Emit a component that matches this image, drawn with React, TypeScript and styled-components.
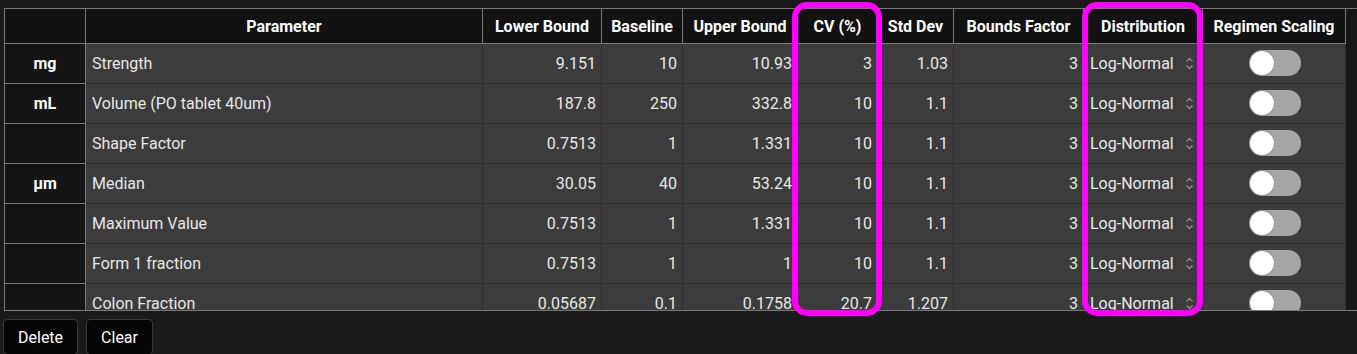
import styled, { createGlobalStyle } from "styled-components";

const GlobalStyle = createGlobalStyle`
  html, body {
    margin: 0;
    padding: 0;
    background: #1a1a1a;
    font-family: Roboto, "Liberation Sans", Arial, sans-serif;
  }
`;

const columns = "81px 397px 119px 81px 115px 80px 76px 130px 119px 143px";

const Page = styled.div`
  position: relative;
  width: 1357px;
  height: 354px;
  padding: 8px 0 0 4px;
  box-sizing: border-box;
  background: #1a1a1a;
`;

const Frame = styled.div`
  display: flex;
  width: 1353px;
  height: 301px;
  border-top: 1px solid #7a7a7a;
  border-left: 1px solid #7a7a7a;
  border-bottom: 1px solid #7a7a7a;
  overflow: hidden;
`;

const Grid = styled.div`
  width: 1341px;
  flex: 0 0 1341px;
  overflow: hidden;
`;

const ScrollTrack = styled.div`
  flex: 0 0 12px;
  background: #171717;
`;

const HeaderRow = styled.div`
  display: grid;
  grid-template-columns: ${columns};
  height: 35px;
`;

const HeaderCell = styled.div`
  box-sizing: border-box;
  display: flex;
  align-items: center;
  justify-content: center;
  background: #121212;
  border-right: 1px solid #7a7a7a;
  border-bottom: 1px solid #7a7a7a;
  color: #ffffff;
  font-size: 16px;
  font-weight: 700;
  white-space: nowrap;
  overflow: hidden;
`;

const Row = styled.div`
  display: grid;
  grid-template-columns: ${columns};
  height: 40px;
`;

const UnitCell = styled.div`
  box-sizing: border-box;
  display: flex;
  align-items: center;
  justify-content: center;
  padding-bottom: 1px;
  background: #141414;
  border-right: 1px solid #7a7a7a;
  border-bottom: 1px solid #7a7a7a;
  color: #ffffff;
  font-size: 16px;
  font-weight: 700;
`;

const Cell = styled.div<{ $align?: "left" | "right" | "center" }>`
  box-sizing: border-box;
  display: flex;
  align-items: center;
  justify-content: ${(p) =>
    p.$align === "left" ? "flex-start" : p.$align === "center" ? "center" : "flex-end"};
  padding: 0 5px 1px 6px;
  background: #3c3c3c;
  border-right: 1px solid #2e2e2e;
  border-bottom: 1px solid #2e2e2e;
  color: #e8e8e8;
  font-size: 16px;
  white-space: nowrap;
  overflow: hidden;
`;

const SelectBox = styled.div`
  display: flex;
  align-items: center;
  justify-content: space-between;
  width: 100%;
  padding-right: 3px;
`;

const Track = styled.div<{ $on?: boolean }>`
  position: relative;
  width: 52px;
  height: 26px;
  border-radius: 13px;
  background: ${(p) => (p.$on ? "#4a90d9" : "#a6a6a6")};
`;

const Thumb = styled.div`
  position: absolute;
  top: 1px;
  left: 1px;
  width: 24px;
  height: 24px;
  border-radius: 50%;
  background: #ffffff;
  box-shadow: 0 0 2px rgba(0, 0, 0, 0.4);
`;

const Toolbar = styled.div`
  display: flex;
  gap: 8px;
  margin: 8px 0 0 -1px;
`;

const Button = styled.button`
  height: 36px;
  padding: 0 14px;
  background: #050505;
  border: 1px solid #3a3a3a;
  border-radius: 4px;
  color: #ffffff;
  font-family: inherit;
  font-size: 16px;
`;

const Highlight = styled.div<{ $left: number; $width: number }>`
  position: absolute;
  top: 2px;
  left: ${(p) => p.$left}px;
  width: ${(p) => p.$width}px;
  height: 314px;
  box-sizing: border-box;
  border: 6px solid #ff00ff;
  border-radius: 15px;
  pointer-events: none;
`;

const headers = [
  "",
  "Parameter",
  "Lower Bound",
  "Baseline",
  "Upper Bound",
  "CV (%)",
  "Std Dev",
  "Bounds Factor",
  "Distribution",
  "Regimen Scaling",
];

const rows = [
  { unit: "mg", name: "Strength", lower: "9.151", base: "10", upper: "10.93", cv: "3", sd: "1.03" },
  { unit: "mL", name: "Volume (PO tablet 40um)", lower: "187.8", base: "250", upper: "332.8", cv: "10", sd: "1.1" },
  { unit: "", name: "Shape Factor", lower: "0.7513", base: "1", upper: "1.331", cv: "10", sd: "1.1" },
  { unit: "µm", name: "Median", lower: "30.05", base: "40", upper: "53.24", cv: "10", sd: "1.1" },
  { unit: "", name: "Maximum Value", lower: "0.7513", base: "1", upper: "1.331", cv: "10", sd: "1.1" },
  { unit: "", name: "Form 1 fraction", lower: "0.7513", base: "1", upper: "1", cv: "10", sd: "1.1" },
  { unit: "", name: "Colon Fraction", lower: "0.05687", base: "0.1", upper: "0.1758", cv: "20.7", sd: "1.207" },
];

function UpDown() {
  return (
    <svg width="9" height="13" viewBox="0 0 9 13" fill="none" stroke="#8c8c8c" strokeWidth="1.4">
      <path d="M1.5 4.5 L4.5 1.5 L7.5 4.5" />
      <path d="M1.5 8.5 L4.5 11.5 L7.5 8.5" />
    </svg>
  );
}

export default function App() {
  return (
    <Page>
      <GlobalStyle />
      <Frame>
        <Grid>
          <HeaderRow>
            {headers.map((h, i) => (
              <HeaderCell key={i}>{h}</HeaderCell>
            ))}
          </HeaderRow>
          {rows.map((r) => (
            <Row key={r.name}>
              <UnitCell>{r.unit}</UnitCell>
              <Cell $align="left">{r.name}</Cell>
              <Cell>{r.lower}</Cell>
              <Cell>{r.base}</Cell>
              <Cell>{r.upper}</Cell>
              <Cell>{r.cv}</Cell>
              <Cell>{r.sd}</Cell>
              <Cell>3</Cell>
              <Cell $align="left">
                <SelectBox>
                  <span>Log-Normal</span>
                  <UpDown />
                </SelectBox>
              </Cell>
              <Cell $align="center">
                <Track>
                  <Thumb />
                </Track>
              </Cell>
            </Row>
          ))}
        </Grid>
        <ScrollTrack />
      </Frame>
      <Toolbar>
        <Button>Delete</Button>
        <Button>Clear</Button>
      </Toolbar>
      <Highlight $left={792} $width={90} />
      <Highlight $left={1082} $width={121} />
    </Page>
  );
}
